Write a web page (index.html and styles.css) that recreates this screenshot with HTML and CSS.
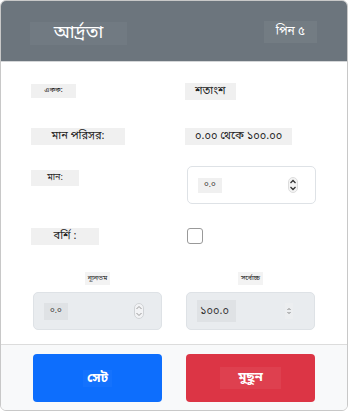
FILE: index.html
```html
<!DOCTYPE html>
<html lang="bn">
<head>
    <meta charset="UTF-8">
    <meta name="viewport" content="width=device-width, initial-scale=1.0">
    <title>আর্দ্রতা</title>
    <link rel="stylesheet" href="styles.css">
</head>
<body>
    <div class="dialog">
        <div class="header">
            <span class="title">আর্দ্রতা</span>
            <span class="pin">পিন ৫</span>
        </div>
        <div class="content">
            <div class="row row-unit">
                <div class="cell"><span class="tag tag-xs">একক:</span></div>
                <div class="cell"><span class="tag tag-pad">শতাংশ</span></div>
            </div>
            <div class="row row-range">
                <div class="cell"><span class="tag tag-wide">মান পরিসর:</span></div>
                <div class="cell"><span class="tag tag-pad">০.০০ থেকে ১০০.০০</span></div>
            </div>
            <div class="row row-value">
                <div class="cell cell-top"><span class="tag tag-mid">মান:</span></div>
                <div class="cell">
                    <div class="spin">
                        <span class="spin-val">০.০</span>
                        <span class="arrows">
                            <svg width="10" height="16" viewBox="0 0 10 16"><rect x="0.5" y="0.5" width="9" height="15" rx="4.5" fill="#f4f4f4" stroke="#ddd"/><path d="M2.5 6 L5 3.5 L7.5 6" fill="none" stroke="#333" stroke-width="1.3"/><path d="M2.5 10 L5 12.5 L7.5 10" fill="none" stroke="#333" stroke-width="1.3"/></svg>
                        </span>
                    </div>
                </div>
            </div>
            <div class="row row-alarm">
                <div class="cell"><span class="tag tag-alarm">বর্শি :</span></div>
                <div class="cell"><span class="check"></span></div>
            </div>
            <div class="limits">
                <div class="limit">
                    <span class="tag tag-tiny">ন্যূনতম</span>
                    <div class="spin spin-off">
                        <span class="spin-val">০.০</span>
                        <span class="arrows">
                            <svg width="10" height="16" viewBox="0 0 10 16"><rect x="0.5" y="0.5" width="9" height="15" rx="4.5" fill="#f2f3f5" stroke="#d0d3d6"/><path d="M2.5 6 L5 3.5 L7.5 6" fill="none" stroke="#999" stroke-width="1"/><path d="M2.5 10 L5 12.5 L7.5 10" fill="none" stroke="#999" stroke-width="1"/></svg>
                        </span>
                    </div>
                </div>
                <div class="limit">
                    <span class="tag tag-tiny">সর্বোচ্চ</span>
                    <div class="spin spin-off">
                        <span class="spin-val spin-big">১০০.০</span>
                        <span class="arrows arrows-small">
                            <svg width="8" height="16" viewBox="0 0 8 16"><rect x="0" y="0" width="8" height="16" fill="#eceef0"/><path d="M2.5 7 L4 5.5 L5.5 7" fill="none" stroke="#666" stroke-width="0.8"/><path d="M2.5 9 L4 10.5 L5.5 9" fill="none" stroke="#666" stroke-width="0.8"/></svg>
                        </span>
                    </div>
                </div>
            </div>
        </div>
        <div class="footer">
            <button class="btn btn-set"><span>সেট</span></button>
            <button class="btn btn-clear"><span>মুছুন</span></button>
        </div>
    </div>
</body>
</html>
```

FILE: styles.css
```css
* {
    margin: 0;
    padding: 0;
    box-sizing: border-box;
}

body {
    width: 348px;
    height: 412px;
    background: #fff;
    font-family: "Noto Sans Bengali", "Noto Serif Bengali", "Noto Sans", sans-serif;
    color: #222;
}

.dialog {
    width: 348px;
    height: 411px;
    border: 1px solid #c8c8c8;
    border-radius: 6px;
    overflow: hidden;
    display: flex;
    flex-direction: column;
}

.header {
    height: 61px;
    flex-shrink: 0;
    background: #6c757d;
    border-bottom: 1px solid #d4d6d8;
    display: flex;
    align-items: center;
    justify-content: space-between;
    padding: 0 30px 0 29px;
}

.title {
    width: 97px;
    color: #fff;
    font-size: 18px;
    line-height: 23px;
    text-align: center;
    background: rgba(255, 255, 255, 0.04);
    margin-top: 4px;
}

.pin {
    color: #fff;
    font-size: 12px;
    line-height: 22px;
    padding: 0 12px;
    background: rgba(255, 255, 255, 0.05);
    margin-top: 1px;
}

.content {
    flex: 1;
    padding: 0 31px 0 30px;
    display: flex;
    flex-direction: column;
    border-bottom: 1px solid #dcdcdc;
}

.row {
    display: grid;
    grid-template-columns: 153px 1fr;
    align-items: center;
}

.cell {
    display: flex;
    align-items: center;
}

.cell-top {
    align-self: start;
    padding-top: 12px;
}

.row-unit {
    height: 56px;
    padding-top: 2px;
}

.row-range {
    height: 36px;
}

.row-value {
    height: 58px;
    padding-top: 4px;
}

.row-alarm {
    height: 48px;
}

.tag {
    display: inline-block;
    background: #f0f0f0;
    color: #222;
    font-size: 11px;
    line-height: 17px;
    text-align: center;
}

.tag-xs {
    width: 45px;
    font-size: 7px;
    line-height: 14px;
}

.tag-pad {
    padding: 0 10px;
    margin-left: 1px;
}

.tag-wide {
    width: 94px;
}

.tag-mid {
    width: 48px;
    font-size: 9px;
    line-height: 16px;
}

.tag-alarm {
    width: 68px;
}

.tag-tiny {
    font-size: 7px;
    line-height: 13px;
    padding: 0 3px;
    background: #f3f3f3;
}

.spin {
    width: 129px;
    height: 38px;
    margin-left: 3px;
    border: 1px solid #dee2e6;
    border-radius: 5px;
    background: #fff;
    display: flex;
    align-items: center;
    justify-content: space-between;
    padding: 0 17px 0 10px;
}

.spin-val {
    display: inline-block;
    font-size: 8px;
    line-height: 15px;
    padding: 0 6px;
    background: #f0f0f0;
    color: #333;
}

.arrows {
    display: flex;
}

.check {
    display: block;
    width: 16px;
    height: 16px;
    margin-left: 3px;
    border: 1px solid #999;
    border-radius: 3px;
    background: #fff;
}

.limits {
    display: grid;
    grid-template-columns: 129px 129px;
    gap: 24px;
    padding: 12px 0 0 2px;
}

.limit {
    display: flex;
    flex-direction: column;
    align-items: center;
    gap: 7px;
}

.limit .spin {
    margin-left: 0;
}

.spin-off {
    background: #e9ecef;
    border-color: #dee2e6;
}

.spin-off .spin-val {
    background: #dfe2e5;
    line-height: 17px;
}

.spin-big {
    font-size: 11px;
    line-height: 22px !important;
    padding: 0 7px 0 3px;
}

.arrows-small {
    margin-right: 4px;
}

.footer {
    height: 65px;
    flex-shrink: 0;
    background: #f8f9fa;
    display: grid;
    grid-template-columns: 129px 129px;
    gap: 24px;
    padding: 9px 32px 0;
}

.btn {
    height: 48px;
    border: none;
    border-radius: 4px;
    color: #fff;
    font-family: inherit;
    font-size: 13px;
    font-weight: bold;
    display: flex;
    align-items: center;
    justify-content: center;
}

.btn span {
    padding: 0 4px;
    background: rgba(255, 255, 255, 0.03);
}

.btn-set {
    background: #0d6efd;
}

.btn-clear {
    background: #dc3545;
}

.btn-clear span {
    padding: 0 18px;
    line-height: 22px;
    background: rgba(255, 255, 255, 0.06);
}
```
